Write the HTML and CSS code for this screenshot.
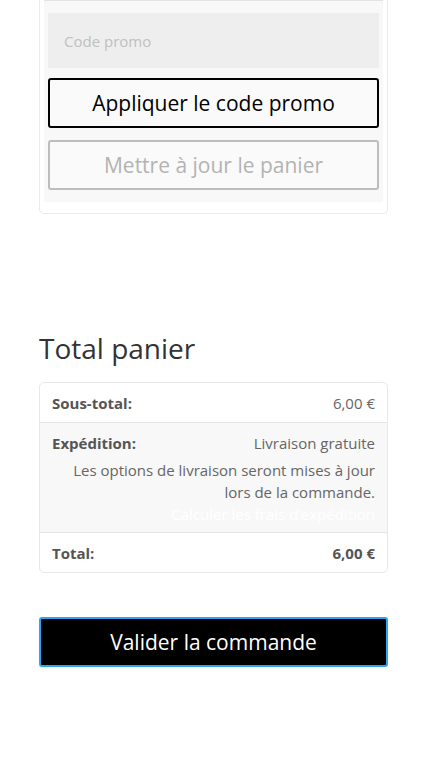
FILE: index.html
```html
<!DOCTYPE html>
<html lang="fr">
<head>
<meta charset="utf-8">
<title>Panier</title>
<link rel="stylesheet" href="styles.css">
</head>
<body>
<div class="page">
  <div class="coupon-card">
    <div class="coupon-inner">
      <input class="coupon-input" type="text" placeholder="Code promo">
      <button class="btn btn-apply">Appliquer le code promo</button>
      <button class="btn btn-update">Mettre à jour le panier</button>
    </div>
  </div>

  <h2 class="totals-title">Total panier</h2>

  <div class="totals-table">
    <div class="row row-sub">
      <span class="label">Sous-total:</span>
      <span class="value">6,00 €</span>
    </div>
    <div class="row row-ship">
      <div class="ship-head">
        <span class="label">Expédition:</span>
        <span class="value">Livraison gratuite</span>
      </div>
      <p class="ship-note">Les options de livraison seront mises à jour lors de la commande.</p>
      <p class="ship-calc">Calculer les frais d’expédition</p>
    </div>
    <div class="row row-total">
      <span class="label">Total:</span>
      <span class="value strong">6,00 €</span>
    </div>
  </div>

  <button class="btn-checkout">Valider la commande</button>
</div>
</body>
</html>
```

FILE: styles.css
```css
* { box-sizing: border-box; }
html, body { margin: 0; padding: 0; background: #fff; }
body {
  font-family: "Open Sans", "DejaVu Sans", sans-serif;
  color: #666;
}
.page {
  width: 349px;
  margin-left: 39px;
  padding-bottom: 96px;
}
.coupon-card {
  border: 1px solid #eaeaea;
  border-top: none;
  border-radius: 0 0 5px 5px;
  padding: 0 4px 11px;
}
.coupon-inner {
  background: #f8f8f8;
  border-top: 1px solid #e4e4e4;
  padding: 12px 4px 12px;
  display: flex;
  flex-direction: column;
}
.coupon-input {
  height: 55px;
  border: none;
  background: #eeeeee;
  padding: 0 16px;
  font-family: inherit;
  font-size: 15px;
  color: #999;
  outline: none;
}
.coupon-input::placeholder { color: #c0c0c0; }
.btn {
  height: 50px;
  background: #fafafa;
  border-radius: 3px;
  font-family: inherit;
  font-size: 21px;
  font-weight: 500;
  cursor: pointer;
  padding: 0;
}
.btn-apply {
  margin-top: 10px;
  border: 2px solid #000;
  color: #000;
}
.btn-update {
  margin-top: 12px;
  border: 2px solid #bdbdbd;
  color: #b3b3b3;
}
.totals-title {
  margin: 114px 0 0;
  font-size: 28px;
  font-weight: 400;
  color: #333;
  line-height: 40px;
}
.totals-table {
  margin-top: 14px;
  border: 1px solid #e8e8e8;
  border-radius: 5px;
  font-size: 15px;
  color: #666;
  overflow: hidden;
}
.row {
  padding: 0 12px;
}
.row-sub, .row-total {
  height: 40px;
  display: flex;
  align-items: center;
  justify-content: space-between;
}
.row-total { height: 39px; }
.row-sub { border-bottom: 1px solid #e5e5e5; }
.row-ship {
  background: #f8f8f8;
  border-bottom: 1px solid #e5e5e5;
  padding-top: 9px;
  padding-bottom: 7px;
}
.ship-head {
  display: flex;
  justify-content: space-between;
  line-height: 22px;
}
.ship-note {
  margin: 5px 0 0 20px;
  text-align: right;
  line-height: 22px;
}
.ship-calc {
  margin: 0;
  text-align: right;
  color: #fff;
  line-height: 22px;
}
.label {
  font-weight: 700;
  color: #555;
}
.value.strong {
  font-weight: 700;
  color: #555;
}
.btn-checkout {
  display: block;
  width: 100%;
  margin-top: 44px;
  height: 50px;
  padding: 0;
  background: #000;
  color: #fff;
  border: 2px solid #2ea3f2;
  border-radius: 3px;
  font-family: inherit;
  font-size: 21px;
  font-weight: 500;
}
```
